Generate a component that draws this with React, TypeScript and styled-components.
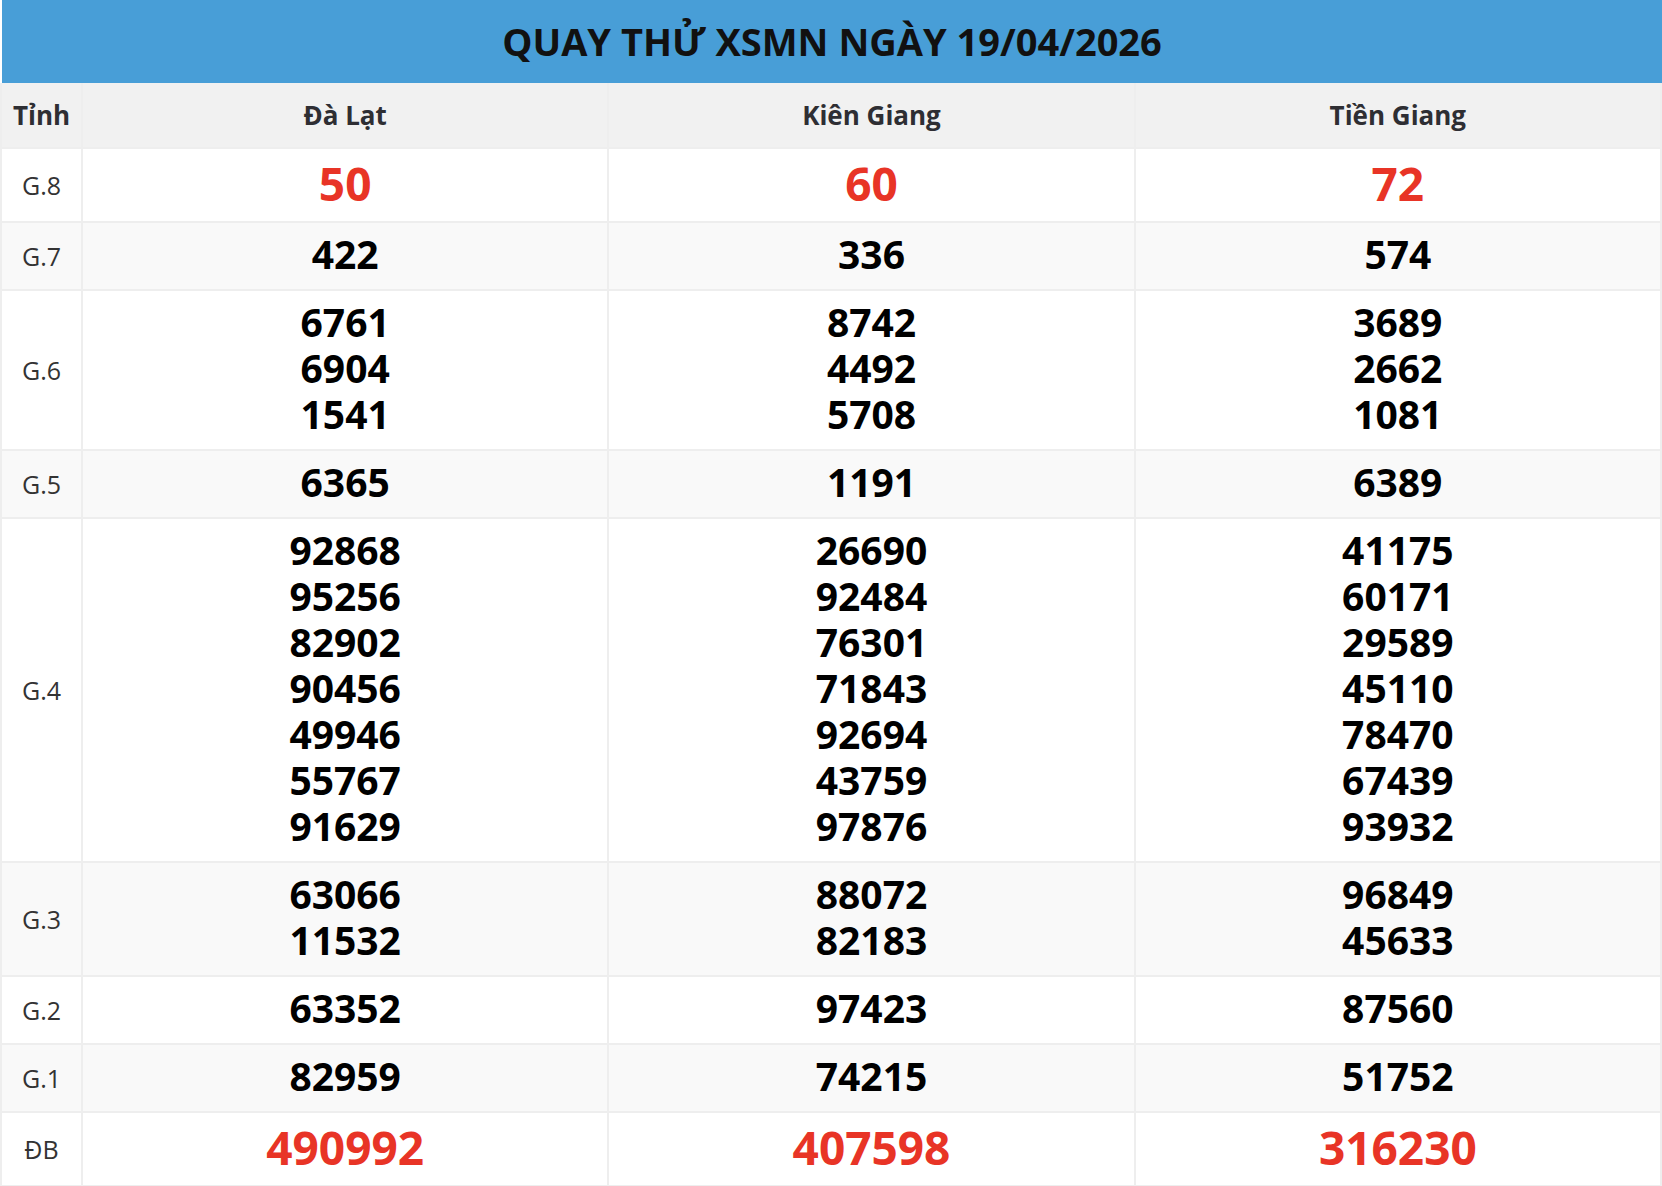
import styled, { createGlobalStyle } from "styled-components";

const GlobalStyle = createGlobalStyle`
	html, body {
		margin: 0;
		padding: 0;
		background: #ffffff;
		font-family: "Open Sans", "Noto Sans", sans-serif;
	}
`;

const Wrapper = styled.div`
	width: 1662px;
`;

const Title = styled.h2`
	margin: 0 0 0 2px;
	height: 83px;
	line-height: 83px;
	background-color: #489ed7;
	color: #111111;
	font-size: 38px;
	font-weight: 700;
	text-align: center;
`;

const Table = styled.table`
	width: 1662px;
	border-collapse: collapse;
	table-layout: fixed;
	border: 2px solid #eeeeee;
	border-top: none;
`;

const HeadCell = styled.th<{ $first?: boolean }>`
	height: 64px;
	padding: 0;
	background-color: #f1f1f1;
	color: #2e2e33;
	font-size: 26px;
	font-weight: 700;
	text-align: center;
	border: 2px solid #eeeeee;
	border-top: none;
	width: ${(p) => (p.$first ? "79px" : "auto")};
`;

const Row = styled.tr<{ $shade: boolean }>`
	background-color: ${(p) => (p.$shade ? "#f9f9f9" : "#ffffff")};
`;

const Label = styled.td`
	padding: 10px 0;
	border: 2px solid #eeeeee;
	color: #333333;
	font-size: 25px;
	text-align: center;
`;

const Cell = styled.td`
	padding: 8px 0 12px;
	border: 2px solid #eeeeee;
	text-align: center;
`;

const Num = styled.div<{ $big?: boolean }>`
	font-weight: 700;
	font-size: ${(p) => (p.$big ? "46px" : "39px")};
	line-height: ${(p) => (p.$big ? "52px" : "46px")};
	color: ${(p) => (p.$big ? "#e83426" : "#000000")};
`;

const provinces = ["Đà Lạt", "Kiên Giang", "Tiền Giang"];

type Prize = { label: string; big?: boolean; values: string[][] };

const prizes: Prize[] = [
	{ label: "G.8", big: true, values: [["50"], ["60"], ["72"]] },
	{ label: "G.7", values: [["422"], ["336"], ["574"]] },
	{
		label: "G.6",
		values: [
			["6761", "6904", "1541"],
			["8742", "4492", "5708"],
			["3689", "2662", "1081"],
		],
	},
	{ label: "G.5", values: [["6365"], ["1191"], ["6389"]] },
	{
		label: "G.4",
		values: [
			["92868", "95256", "82902", "90456", "49946", "55767", "91629"],
			["26690", "92484", "76301", "71843", "92694", "43759", "97876"],
			["41175", "60171", "29589", "45110", "78470", "67439", "93932"],
		],
	},
	{
		label: "G.3",
		values: [
			["63066", "11532"],
			["88072", "82183"],
			["96849", "45633"],
		],
	},
	{ label: "G.2", values: [["63352"], ["97423"], ["87560"]] },
	{ label: "G.1", values: [["82959"], ["74215"], ["51752"]] },
	{ label: "ĐB", big: true, values: [["490992"], ["407598"], ["316230"]] },
];

function App() {
	return (
		<Wrapper>
			<GlobalStyle />
			<Title>QUAY THỬ XSMN NGÀY 19/04/2026</Title>
			<Table>
				<thead>
					<tr>
						<HeadCell $first>Tỉnh</HeadCell>
						{provinces.map((p) => (
							<HeadCell key={p}>{p}</HeadCell>
						))}
					</tr>
				</thead>
				<tbody>
					{prizes.map((prize, i) => (
						<Row key={prize.label} $shade={i % 2 === 1}>
							<Label>{prize.label}</Label>
							{prize.values.map((list, j) => (
								<Cell key={j}>
									{list.map((v) => (
										<Num key={v} $big={prize.big}>
											{v}
										</Num>
									))}
								</Cell>
							))}
						</Row>
					))}
				</tbody>
			</Table>
		</Wrapper>
	);
}

export default App;
